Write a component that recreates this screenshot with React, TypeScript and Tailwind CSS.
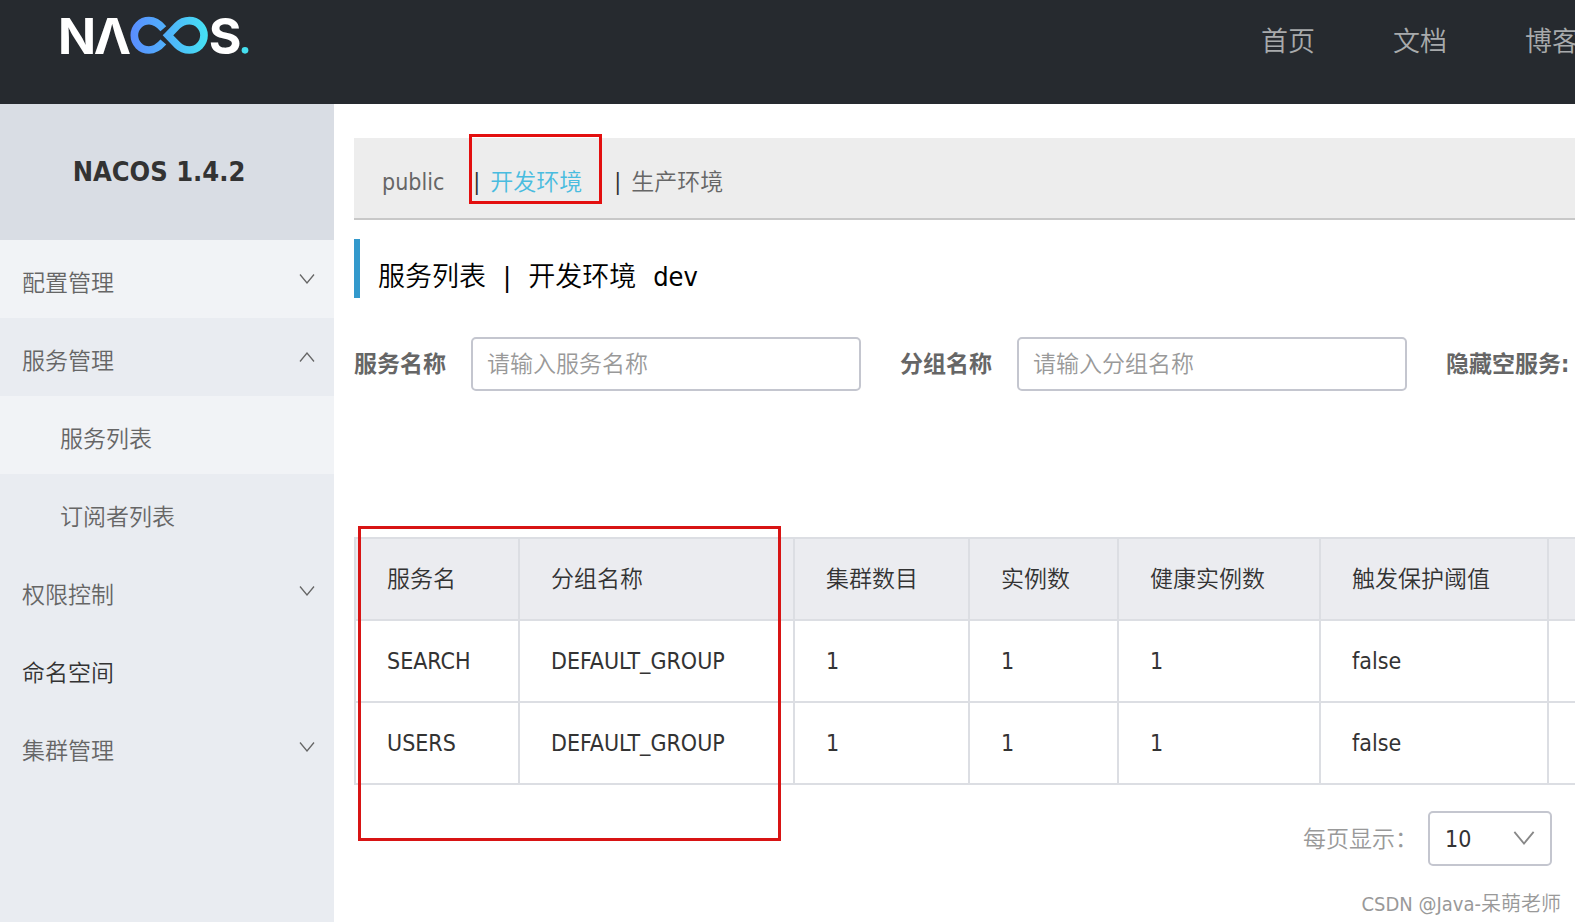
import { useState } from 'react'

const FONT = "font-['DejaVu_Sans_Condensed','Noto_Sans_CJK_SC',sans-serif]"

const navLinks = ['首页', '文档', '博客']

type MenuItem = {
  label: string
  state?: 'open' | 'closed'
  child?: boolean
  className: string
}

const menu: MenuItem[] = [
  { label: '配置管理', state: 'closed', className: 'bg-[#f1f3f6] text-[#666]' },
  { label: '服务管理', state: 'open', className: 'text-[#666]' },
  { label: '服务列表', child: true, className: 'bg-[#f1f3f6] text-[#666]' },
  { label: '订阅者列表', child: true, className: 'text-[#666]' },
  { label: '权限控制', state: 'closed', className: 'text-[#666]' },
  { label: '命名空间', className: 'text-[#333]' },
  { label: '集群管理', state: 'closed', className: 'text-[#666]' },
]

const columns = [
  { title: '服务名', width: 'w-[164px]' },
  { title: '分组名称', width: 'w-[275px]' },
  { title: '集群数目', width: 'w-[175px]' },
  { title: '实例数', width: 'w-[149px]' },
  { title: '健康实例数', width: 'w-[202px]' },
  { title: '触发保护阈值', width: 'w-[228px]' },
  { title: '', width: '' },
]

const services = [
  { name: 'SEARCH', group: 'DEFAULT_GROUP', clusters: 1, instances: 1, healthy: 1, protect: 'false' },
  { name: 'USERS', group: 'DEFAULT_GROUP', clusters: 1, instances: 1, healthy: 1, protect: 'false' },
]

function Logo() {
  return (
    <svg viewBox="0 0 630 165" className="h-[55px] w-[210px] overflow-visible" role="img" aria-label="NACOS">
      <defs>
        <linearGradient id="loop" gradientUnits="userSpaceOnUse" x1="241" y1="0" x2="474" y2="0">
          <stop offset="0" stopColor="#5a8cff" />
          <stop offset="0.5" stopColor="#4fb4fa" />
          <stop offset="1" stopColor="#45e3f3" />
        </linearGradient>
      </defs>
      <g fill="#fff" fontFamily="Inter, sans-serif" fontWeight="700" fontSize="150">
        <text x="24" y="131">N</text>
        <text x="131" y="131">Λ</text>
        <text x="476" y="131">S</text>
      </g>
      <g fill="none" stroke="url(#loop)" strokeWidth="23">
        <path d="M340 56 C327 41 315 32 297 32 A44 44 0 0 0 297 120 C315 120 327 111 340 96" />
        <path d="M354 76 L382 47 C393 36 404 32 418 32 A44 44 0 0 1 418 120 C404 120 393 116 382 105 Z" />
      </g>
      <circle cx="585" cy="121" r="10" fill="#45dff0" />
    </svg>
  )
}

function Chevron({ up = false, className }: { up?: boolean; className: string }) {
  return (
    <svg viewBox="0 0 16 10" className={className} fill="none" stroke="currentColor" aria-hidden="true">
      <path d={up ? 'M1 9.5 8 1l7 8.5' : 'M1 .5 8 9l7-8.5'} strokeWidth="1.3" />
    </svg>
  )
}

function Header() {
  return (
    <header className="flex h-[104px] items-start justify-between overflow-hidden bg-[#262a2f] pl-[50px]">
      <a href="#" className="mt-[10px]">
        <Logo />
      </a>
      <nav className="-mr-1 flex gap-[78px] pt-[22px]">
        {navLinks.map((label) => (
          <a key={label} href="#" className="text-[27px] leading-10 whitespace-nowrap text-[#a8aaac]">
            {label}
          </a>
        ))}
      </nav>
    </header>
  )
}

function Sidebar() {
  return (
    <aside className="w-[334px] shrink-0 bg-[#e9ecf1]">
      <h1 className="flex h-[136px] items-center justify-center bg-[#d9dde4] pr-4 text-[27px] font-bold text-[#333]">
        NACOS 1.4.2
      </h1>
      <ul>
        {menu.map((item) => (
          <li key={item.label} className={item.className}>
            <a
              href="#"
              className={`flex h-[78px] items-center justify-between pr-[19px] ${item.child ? 'pl-[60px]' : 'pl-[22px]'}`}
            >
              <span className="pt-2">{item.label}</span>
              {item.state && <Chevron up={item.state === 'open'} className="h-[10px] w-4" />}
            </a>
          </li>
        ))}
      </ul>
    </aside>
  )
}

function Namespaces() {
  return (
    <div className="mt-[34px] flex h-[82px] items-center gap-[10px] border-b-2 border-[#c8c8c8] bg-[#ededed] pt-2 pl-7 text-[#666]">
      <a href="#" className="mr-[19px]">public</a>
      <div className="relative flex gap-[10px]">
        <span className="text-[#333]">|</span>
        <a href="#" className="text-[#49bcdf]">开发环境</a>
        <span className="pointer-events-none absolute -top-8 -left-1 h-[70px] w-[133px] border-3 border-[#e30f0f]" />
      </div>
      <span className="ml-[22px] text-[#333]">|</span>
      <a href="#">生产环境</a>
    </div>
  )
}

function SearchField({ id, label, placeholder }: { id: string; label: string; placeholder: string }) {
  const [value, setValue] = useState('')
  return (
    <div className="flex shrink-0 items-center">
      <label htmlFor={id} className="w-[117px] font-bold whitespace-nowrap text-[#666]">
        {label}
      </label>
      <input
        id={id}
        value={value}
        onChange={(e) => setValue(e.target.value)}
        placeholder={placeholder}
        className="h-[54px] w-[390px] rounded-[5px] border-2 border-[#c4c6cf] px-[14px] outline-none placeholder:text-[#999]"
      />
    </div>
  )
}

function ServiceTable() {
  return (
    <div className="relative mt-[146px]">
      <table className="w-full table-fixed border-separate border-spacing-0 border-t-2 border-l-2 border-[#dcdee3] text-left text-[#333]">
        <thead>
          <tr className="bg-[#ebecf0]">
            {columns.map((col, i) => (
              <th
                key={i}
                scope="col"
                className={`h-[82px] border-r-2 border-b-2 border-[#dcdee3] pl-[31px] font-[350] whitespace-nowrap last:border-r-0 ${col.width}`}
              >
                {col.title}
              </th>
            ))}
          </tr>
        </thead>
        <tbody>
          {services.map((s) => (
            <tr key={s.name}>
              {[s.name, s.group, s.clusters, s.instances, s.healthy, s.protect, ''].map((cell, i) => (
                <td key={i} className="h-[82px] border-r-2 border-b-2 border-[#dcdee3] pl-[31px] last:border-r-0">
                  {cell}
                </td>
              ))}
            </tr>
          ))}
        </tbody>
      </table>
      <span className="pointer-events-none absolute -top-[11px] left-1 h-[315px] w-[423px] border-3 border-[#d81414]" />
    </div>
  )
}

function Pagination() {
  return (
    <div className="mt-[26px] flex items-center justify-end pr-[23px]">
      <label htmlFor="page-size" className="mr-[10px] text-[#999]">
        每页显示：
      </label>
      <div className="relative">
        <select
          id="page-size"
          className="h-[55px] w-[124px] appearance-none rounded-[5px] border-2 border-[#c4c6cf] bg-white pl-[15px] text-[#333]"
        >
          <option>10</option>
          <option>20</option>
          <option>50</option>
        </select>
        <Chevron className="pointer-events-none absolute top-5 right-[17px] h-[14px] w-[22px] text-[#888]" />
      </div>
    </div>
  )
}

export default function App() {
  return (
    <div className={`relative flex min-h-screen flex-col overflow-hidden bg-white text-[23px] leading-8 ${FONT} font-[350]`}>
      <Header />
      <div className="flex flex-1">
        <Sidebar />
        <main className="min-w-0 flex-1 pl-5">
          <Namespaces />
          <h2 className="mt-[19px] flex h-[59px] items-center gap-[17px] border-l-6 border-[#3399cc] pt-[17px] pl-[18px] text-[27px] font-[350] text-black">
            <span>服务列表</span>
            <span>|</span>
            <span>开发环境</span>
            <span>dev</span>
          </h2>
          <form className="mt-[39px] flex items-center gap-[39px] overflow-hidden">
            <SearchField id="service-name" label="服务名称" placeholder="请输入服务名称" />
            <SearchField id="group-name" label="分组名称" placeholder="请输入分组名称" />
            <span className="shrink-0 font-bold text-[#666]">隐藏空服务:</span>
          </form>
          <ServiceTable />
          <Pagination />
        </main>
      </div>
      <p className="absolute right-[14px] bottom-1 text-xl text-[#999]">CSDN @Java-呆萌老师</p>
    </div>
  )
}
